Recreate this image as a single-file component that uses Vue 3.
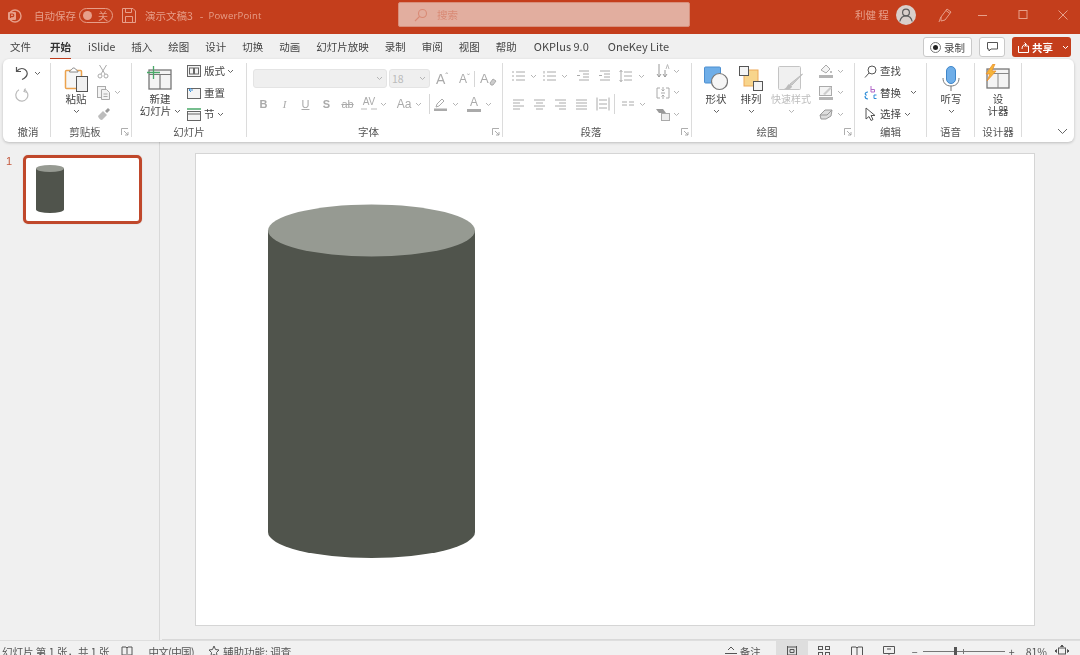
<script setup>
const tabs = ['文件', '开始', 'iSlide', '插入', '绘图', '设计', '切换', '动画', '幻灯片放映', '录制', '审阅', '视图', '帮助']
</script>

<template>
  <div class="app">
    <header class="title">
      <svg class="logo" width="16" height="16" viewBox="0 0 16 16"><circle cx="9" cy="8" r="6" fill="none" stroke="#e79f8a" stroke-width="1.4"/><rect x="2" y="4" width="8" height="8" rx="1" fill="#e79f8a"/><path d="M4.5 10V6h2a1.2 1.2 0 0 1 0 2.6h-2" fill="none" stroke="#c43e1c" stroke-width="1.1"/></svg>
      <span class="autosave">自动保存</span>
      <span class="toggle"><i></i><b>关</b></span>
      <svg class="save" width="14" height="15" viewBox="0 0 14 15" fill="none" stroke="#e79f8a"><path d="M.5.5h10.5l2.5 2.5v11.5H.5z"/><path d="M3.5.5v4h6v-4M3.5 14.5v-6h7v6"/></svg>
      <span class="docname">演示文稿3</span>
      <span class="dash">-</span>
      <span class="appname">PowerPoint</span>
      <div class="search">
        <svg width="14" height="14" viewBox="0 0 14 14" fill="none" stroke="#d98a75" stroke-width="1.1"><circle cx="8.5" cy="5.5" r="4"/><path d="M5.5 8.5L1 13"/></svg>
        <span>搜索</span>
      </div>
      <span class="user">利健 程</span>
      <svg class="avatar" width="20" height="20" viewBox="0 0 20 20"><circle cx="10" cy="10" r="10" fill="#d9cfcb"/><circle cx="10" cy="7.5" r="3.4" fill="none" stroke="#5b5b5b" stroke-width="1.2"/><path d="M3.8 16.5c.8-3.8 3.2-5.6 6.2-5.6s5.400 1.800 6.200 5.600" fill="none" stroke="#5b5b5b" stroke-width="1.2"/></svg>
      <svg class="pen" width="14" height="16" viewBox="0 0 14 16" fill="none" stroke="#e79f8a"><path d="M3 10l6-8 4 3-6 8-4 1z"/><path d="M1 15c1-3 1-3 2-5M8 3.500l4 3"/></svg>
      <div class="winbtns">
        <svg width="12" height="12" viewBox="0 0 12 12"><path d="M1 6.500h9" stroke="#e79f8a" fill="none"/></svg>
        <svg width="12" height="12" viewBox="0 0 12 12"><rect x="2" y="1.500" width="8" height="8" stroke="#e79f8a" fill="none"/></svg>
        <svg width="12" height="12" viewBox="0 0 12 12"><path d="M1.500 1.500l9 9M10.500 1.500l-9 9" stroke="#e79f8a" fill="none"/></svg>
      </div>
    </header>

    <nav class="tabbar">
      <div class="tabs">
        <span v-for="t in tabs" :key="t" class="tab" :class="{ active: t === '开始', lead: t === '文件' }">{{ t }}</span>
        <span class="tab okplus">OKPlus 9.0</span>
        <span class="tab onekey">OneKey Lite</span>
      </div>
      <div class="tabright">
        <span class="pill rec"><svg width="11" height="11" viewBox="0 0 11 11"><circle cx="5.500" cy="5.500" r="5" fill="none" stroke="#777"/><circle cx="5.500" cy="5.500" r="2.500" fill="#222"/></svg>录制</span>
        <span class="pill cmt"><svg width="11" height="10" viewBox="0 0 11 10"><path d="M.5.500h10v6.500H4l-2 2V7H.5z" fill="none" stroke="#555"/></svg></span>
        <span class="share">
          <svg width="13" height="12" viewBox="0 0 13 12" fill="none" stroke="#fff"><path d="M1.500 5v6.500h10V5h-3M5 8c0-3 1.500-4.500 4-4.500M7.500 1.500l2 2-2 2"/></svg>
          <b>共享</b>
          <svg class="sharechev" width="7" height="5" viewBox="0 0 7 5" fill="none" stroke="#fff"><path d="M1 1l2.500 2.500L6 1"/></svg>
        </span>
      </div>
    </nav>

    <section class="ribbon">
      <!-- 撤消 -->
      <div class="group g1">
        <div class="body col3 undo">
          <div class="row">
            <svg width="14" height="15" viewBox="0 0 14 15" fill="none" stroke="#555" stroke-width="1.200"><path d="M1.500 1v4.500H6"/><path d="M1.500 5.500C4 2.500 7.500 2 10 3.500c3.500 2.500 3 7.500-3 10"/></svg>
            <svg class="chev" viewBox="0 0 7 5"><path d="M1 1l2.500 2.500L6 1"/></svg>
          </div>
          <div class="row">
            <svg width="14" height="15" viewBox="0 0 14 15" fill="none" stroke="#bbb" stroke-width="1.200"><path d="M10.500 1.500L9 4.500l3 1"/><path d="M9 2.500a6 6 0 1 1-5 .3"/></svg>
          </div>
        </div>
        <div class="label">撤消</div>
      </div>

      <!-- 剪贴板 -->
      <div class="group g2 haslaunch">
        <div class="body">
          <div class="big paste">
            <svg width="24" height="26" viewBox="0 0 24 26"><rect x="1.500" y="4.500" width="16" height="18" rx="1" fill="#f6f6f6" stroke="#eca24d" stroke-width="1.500"/><path d="M5.500 6c0-2 2-1.500 2.500-3a2 2 0 0 1 3.500 0c.5 1.500 2.500 1 2.500 3z" fill="#fff" stroke="#888"/><rect x="12.500" y="10.500" width="11" height="15" fill="#f0f0f0" stroke="#555"/></svg>
            <span class="dark">粘贴</span>
            <svg class="chev" viewBox="0 0 7 5"><path d="M1 1l2.500 2.500L6 1"/></svg>
          </div>
          <div class="col3 clip">
            <div class="row">
              <svg width="12" height="15" viewBox="0 0 12 15" fill="none" stroke="#aaa"><path d="M2.500 1l5.500 9M9.500 1L4 10"/><circle cx="3" cy="12" r="2"/><circle cx="9" cy="12" r="2"/></svg>
            </div>
            <div class="row">
              <svg width="13" height="14" viewBox="0 0 13 14" fill="#f4f4f4" stroke="#aaa"><rect x=".5" y=".5" width="8" height="11"/><path d="M4.500 3.500h5l3 3v7h-8z"/><path d="M6.500 8h4M6.500 10.500h4"/></svg>
              <svg class="chev faint" viewBox="0 0 7 5"><path d="M1 1l2.500 2.500L6 1"/></svg>
            </div>
            <div class="row">
              <svg width="14" height="14" viewBox="0 0 14 14"><path d="M1 9l5-5 4 4-5 5c-2 0-3.500-2-4-4z" fill="#bdbdbd"/><path d="M8 4l3-3 2 2-3 3z" fill="#999"/></svg>
            </div>
          </div>
        </div>
        <div class="label">剪贴板</div>
        <svg class="launcher" viewBox="0 0 8 8"><path d="M.5 7V.5H7M3 3l4 4M7 4v3H4"/></svg>
      </div>

      <!-- 幻灯片 -->
      <div class="group g3">
        <div class="body">
          <div class="big newslide">
            <svg width="26" height="26" viewBox="0 0 26 26"><rect x="3" y="4" width="22" height="19" fill="#f4f4f4" stroke="#777" stroke-width="1.300"/><path d="M3 8.500h22M14 8.500V23" stroke="#777" fill="none" stroke-width="1.200"/><path d="M7.500 0v13M1 6.500h13" stroke="#48a868" stroke-width="1.300" fill="none"/></svg>
            <span class="dark">新建</span>
            <span class="dark withchev">幻灯片<svg class="chev" viewBox="0 0 7 5"><path d="M1 1l2.500 2.500L6 1"/></svg></span>
          </div>
          <div class="col3 slidecol">
            <div class="row"><svg width="14" height="12" viewBox="0 0 14 12" fill="#f4f4f4" stroke="#666"><rect x=".5" y=".5" width="13" height="11"/><rect x="2.500" y="3" width="4" height="6"/><rect x="7.500" y="3" width="4" height="6"/></svg><span class="dark">版式</span><svg class="chev" viewBox="0 0 7 5"><path d="M1 1l2.500 2.500L6 1"/></svg></div>
            <div class="row"><svg width="14" height="12" viewBox="0 0 14 12" fill="none"><rect x=".5" y="1.500" width="13" height="10" stroke="#666" fill="#f4f4f4"/><path d="M2 3l2-2M2 3l2 2M2 3h4" stroke="#3a8fd8"/></svg><span class="dark">重置</span></div>
            <div class="row"><svg width="14" height="13" viewBox="0 0 14 13" fill="none"><path d="M0 1h14" stroke="#48a868" stroke-width="1.500"/><rect x=".5" y="3.500" width="13" height="9" stroke="#666" fill="#f4f4f4"/><path d="M0 6h14" stroke="#666"/></svg><span class="dark">节</span><svg class="chev" viewBox="0 0 7 5"><path d="M1 1l2.500 2.500L6 1"/></svg></div>
          </div>
        </div>
        <div class="label">幻灯片</div>
      </div>

      <!-- 字体 -->
      <div class="group g4 haslaunch">
        <div class="body fontbody">
          <div class="fontrow1">
            <span class="select s1"><svg class="chev faint" viewBox="0 0 7 5"><path d="M1 1l2.500 2.500L6 1"/></svg></span>
            <span class="select s2"><em>18</em><svg class="chev faint" viewBox="0 0 7 5"><path d="M1 1l2.500 2.500L6 1"/></svg></span>
            <span class="glyph growa">A<sup>ˆ</sup></span>
            <span class="glyph shrinka">A<sup>ˇ</sup></span>
            <i class="vsep"></i>
            <span class="glyph cleara">A<svg width="8" height="8" viewBox="0 0 8 8"><path d="M1 5l3-4 3 2-3 4H2z" fill="#ccc" stroke="#aaa"/></svg></span>
          </div>
          <div class="fontrow2">
            <span class="f w21 b">B</span>
            <span class="f w21 it">I</span>
            <span class="f w21 un">U</span>
            <span class="f w21 sh">S</span>
            <span class="f w21 st">ab</span>
            <span class="f w22 av">AV<svg width="16" height="4" viewBox="0 0 16 4" fill="none" stroke="#bbb"><path d="M0 2h6M10 2h6"/></svg></span>
            <svg class="chev faint" viewBox="0 0 7 5"><path d="M1 1l2.500 2.500L6 1"/></svg>
            <span class="f aa">Aa</span>
            <svg class="chev faint" viewBox="0 0 7 5"><path d="M1 1l2.500 2.500L6 1"/></svg>
            <i class="vsep tall"></i>
            <span class="colorbtn first"><svg width="13" height="13" viewBox="0 0 13 13"><path d="M2 9l1-3 5-5 2 2-5 5z" fill="none" stroke="#aaa"/><rect y="10.500" width="13" height="2.500" fill="#aaa"/></svg></span>
            <svg class="chev faint" viewBox="0 0 7 5"><path d="M1 1l2.500 2.500L6 1"/></svg>
            <span class="colorbtn second">A</span>
            <svg class="chev faint" viewBox="0 0 7 5"><path d="M1 1l2.500 2.500L6 1"/></svg>
          </div>
        </div>
        <div class="label">字体</div>
        <svg class="launcher" viewBox="0 0 8 8"><path d="M.5 7V.5H7M3 3l4 4M7 4v3H4"/></svg>
      </div>

      <!-- 段落 -->
      <div class="group g5 haslaunch">
        <div class="body parabody">
          <div class="paraleft">
            <div class="pararow r1">
              <svg class="pi" viewBox="0 0 13 12"><path d="M4 2h9M4 6h9M4 10h9M0 2h2M0 6h2M0 10h2"/></svg>
              <svg class="chev faint c1" viewBox="0 0 7 5"><path d="M1 1l2.500 2.500L6 1"/></svg>
              <svg class="pi n" viewBox="0 0 13 12"><path d="M4 2h9M4 6h9M4 10h9M1 1v2.500M0 6h2M0 10h2"/></svg>
              <svg class="chev faint c2" viewBox="0 0 7 5"><path d="M1 1l2.500 2.500L6 1"/></svg>
              <svg class="pi o" viewBox="0 0 13 12"><path d="M2 1h10M6 4h6M6 7h6M2 10h10M0 5.500h3"/></svg>
              <svg class="pi i" viewBox="0 0 13 12"><path d="M2 1h10M6 4h6M6 7h6M2 10h10M1 5.500h3"/></svg>
              <svg class="pi l" viewBox="0 0 13 12"><path d="M5 2h8M5 6h8M5 10h8M2 0v12M.5 2L2 .5 3.500 2M.5 10L2 11.500 3.500 10"/></svg>
              <svg class="chev faint c3" viewBox="0 0 7 5"><path d="M1 1l2.500 2.500L6 1"/></svg>
            </div>
            <div class="pararow r2">
              <svg class="pi" viewBox="0 0 13 12"><path d="M1 2h11M1 5h7M1 8h11M1 11h7"/></svg>
              <svg class="pi a" viewBox="0 0 13 12"><path d="M1 2h11M3 5h7M1 8h11M3 11h7"/></svg>
              <svg class="pi a" viewBox="0 0 13 12"><path d="M1 2h11M5 5h7M1 8h11M5 11h7"/></svg>
              <svg class="pi a" viewBox="0 0 13 12"><path d="M1 2h11M1 5h11M1 8h11M1 11h11"/></svg>
              <svg class="pi d" viewBox="0 0 14 14"><path d="M1 .5v13M13 .5v13M3 3h8M3 7h8M3 11h8"/></svg>
              <i class="vsep para"></i>
              <svg class="pi cols" viewBox="0 0 13 12"><path d="M1 4h5M1 7h5M8 4h5M8 7h5"/></svg>
              <svg class="chev faint c4" viewBox="0 0 7 5"><path d="M1 1l2.500 2.500L6 1"/></svg>
            </div>
          </div>
          <div class="col3 pararight">
            <div class="row"><svg width="14" height="14" viewBox="0 0 14 14" fill="none" stroke="#999"><path d="M3 0v13M1 10l2 3 2-3M9 6v7M7 10l2 3 2-3"/><path d="M10 5l1.500-4.500L13 5" stroke="#bbb"/></svg><svg class="chev faint" viewBox="0 0 7 5"><path d="M1 1l2.500 2.500L6 1"/></svg></div>
            <div class="row"><svg width="14" height="14" viewBox="0 0 14 14" fill="none" stroke="#aaa"><path d="M4 2H1v10h3M10 2h3v10h-3M7 1v4M5.500 3.500L7 5l1.500-1.500M7 13V9M5.500 10.500L7 9l1.500 1.500M5 7h4"/></svg><svg class="chev faint" viewBox="0 0 7 5"><path d="M1 1l2.500 2.500L6 1"/></svg></div>
            <div class="row"><svg width="14" height="13" viewBox="0 0 14 13"><path d="M0 1h7l3 4H3z" fill="#999"/><rect x="5.500" y="5.500" width="8" height="7" fill="#eee" stroke="#aaa"/></svg><svg class="chev faint" viewBox="0 0 7 5"><path d="M1 1l2.500 2.500L6 1"/></svg></div>
          </div>
        </div>
        <div class="label">段落</div>
        <svg class="launcher" viewBox="0 0 8 8"><path d="M.5 7V.5H7M3 3l4 4M7 4v3H4"/></svg>
      </div>

      <!-- 绘图 -->
      <div class="group g6 haslaunch">
        <div class="body">
          <div class="big shape">
            <svg width="24" height="26" viewBox="0 0 24 26"><rect x=".5" y="1" width="16" height="16" rx="1" fill="#6faee8" stroke="#4d8fd0"/><circle cx="15.500" cy="15.500" r="8" fill="#f6f6f6" stroke="#777" stroke-width="1.200"/></svg>
            <span class="dark">形状</span>
            <svg class="chev" viewBox="0 0 7 5"><path d="M1 1l2.500 2.500L6 1"/></svg>
          </div>
          <div class="big arrange">
            <svg width="24" height="26" viewBox="0 0 24 26"><rect x="5" y="4" width="14" height="16" fill="#f8d58c" stroke="#eda958"/><rect x=".5" y=".5" width="9" height="9" fill="#f4f4f4" stroke="#555"/><rect x="14.500" y="15.500" width="9" height="9" fill="#f4f4f4" stroke="#555"/></svg>
            <span class="dark">排列</span>
            <svg class="chev" viewBox="0 0 7 5"><path d="M1 1l2.500 2.500L6 1"/></svg>
          </div>
          <div class="big quick">
            <svg width="26" height="26" viewBox="0 0 26 26"><rect x=".5" y=".5" width="22" height="23" rx="1" fill="#f0f0f0" stroke="#c4c4c4"/><path d="M24.500 8L14 19l-2-1z" fill="#ccc" stroke="#bbb"/><path d="M11 18c-2 1-2 4-5 5 4 1 8 0 8-3z" fill="#bbb"/></svg>
            <span class="mute">快速样式</span>
            <svg class="chev faint" viewBox="0 0 7 5"><path d="M1 1l2.500 2.500L6 1"/></svg>
          </div>
          <div class="col3 drawcol">
            <div class="row"><svg width="14" height="14" viewBox="0 0 14 14"><path d="M2 6l5-5 4 4-4 4z" fill="#f4f4f4" stroke="#aaa"/><circle cx="12" cy="8" r="1" fill="#aaa"/><rect y="11" width="14" height="3" fill="#b5b5b5"/></svg><svg class="chev faint" viewBox="0 0 7 5"><path d="M1 1l2.500 2.500L6 1"/></svg></div>
            <div class="row"><svg width="14" height="14" viewBox="0 0 14 14"><rect x=".5" y=".5" width="12" height="9" fill="#f4f4f4" stroke="#aaa"/><path d="M4 8l7-7 2 1-7 7z" fill="#ccc"/><rect y="11" width="14" height="3" fill="#b5b5b5"/></svg><svg class="chev faint" viewBox="0 0 7 5"><path d="M1 1l2.500 2.500L6 1"/></svg></div>
            <div class="row"><svg width="14" height="12" viewBox="0 0 14 12"><path d="M1 7l5-5h7l-1 6-5 3H2z" fill="#ddd" stroke="#999"/><path d="M1 7h7l5-5" fill="none" stroke="#999"/></svg><svg class="chev faint" viewBox="0 0 7 5"><path d="M1 1l2.500 2.500L6 1"/></svg></div>
          </div>
        </div>
        <div class="label">绘图</div>
        <svg class="launcher" viewBox="0 0 8 8"><path d="M.5 7V.5H7M3 3l4 4M7 4v3H4"/></svg>
      </div>

      <!-- 编辑 -->
      <div class="group g7">
        <div class="body col3 editcol">
          <div class="row"><svg width="13" height="13" viewBox="0 0 13 13" fill="none" stroke="#555"><circle cx="8" cy="5" r="4"/><path d="M5 8l-4 4.500"/></svg><span class="dark">查找</span></div>
          <div class="row"><svg width="13" height="14" viewBox="0 0 13 14" fill="none"><path d="M7 0v6M7 3.500h3.500v2.500H7" stroke="#b36ac9"/><path d="M1 8a3 3 0 0 1 3-2M4 13a3 3 0 0 1-3-3M2.500 9.500L1 8" stroke="#2d8cd8" stroke-width="1.100"/><path d="M12.500 9h-2.500v3.500h2.500" stroke="#2d8cd8"/></svg><span class="dark">替换</span><svg class="chev ml6" viewBox="0 0 7 5"><path d="M1 1l2.500 2.500L6 1"/></svg></div>
          <div class="row"><svg width="13" height="15" viewBox="0 0 13 15" fill="#fff" stroke="#555"><path d="M2 1v11l3-2.500 2 4 2-1-2-4h4z"/></svg><span class="dark">选择</span><svg class="chev" viewBox="0 0 7 5"><path d="M1 1l2.500 2.500L6 1"/></svg></div>
        </div>
        <div class="label">编辑</div>
      </div>

      <!-- 语音 -->
      <div class="group g8">
        <div class="body">
          <div class="big voice">
            <svg width="20" height="26" viewBox="0 0 20 26"><rect x="5.500" y=".5" width="9" height="17" rx="4.500" fill="#6faee8" stroke="#3f86c9"/><path d="M2 12c0 5 3 8 8 8s8-3 8-8" fill="none" stroke="#777"/><path d="M10 20v5" stroke="#777"/></svg>
            <span class="dark">听写</span>
            <svg class="chev" viewBox="0 0 7 5"><path d="M1 1l2.500 2.500L6 1"/></svg>
          </div>
        </div>
        <div class="label">语音</div>
      </div>

      <!-- 设计器 -->
      <div class="group g9">
        <div class="body">
          <div class="big designer">
            <svg width="26" height="26" viewBox="0 0 26 26"><rect x="3" y="5" width="22" height="19" fill="#f4f4f4" stroke="#777" stroke-width="1.300"/><path d="M3 9.500h22M14 9.500V24" stroke="#888" fill="none"/><path d="M9 0L2 10h4l-3 7 9-10H8l3-7z" fill="#f5b53a" stroke="#e98a2a" stroke-width=".7"/></svg>
            <span class="dark">设</span>
            <span class="dark">计器</span>
          </div>
        </div>
        <div class="label">设计器</div>
      </div>

      <svg class="collapse" width="11" height="7" viewBox="0 0 11 7" fill="none" stroke="#666"><path d="M1 1l4.500 4.500L10 1"/></svg>
    </section>

    <main class="main">
      <aside class="panel">
        <span class="num">1</span>
        <div class="thumb">
          <svg width="28" height="48" viewBox="0 0 28 48">
            <path d="M0 3.500V44.500A14 3.500 0 0 0 28 44.500V3.500z" fill="#50544c"/>
            <ellipse cx="14" cy="3.500" rx="14" ry="3.500" fill="#969a92"/>
          </svg>
        </div>
      </aside>
      <div class="stage">
        <div class="slide">
          <svg width="838" height="471" viewBox="0 0 838 471">
            <path d="M72 76.500V378A103.500 26 0 0 0 279 378V76.500z" fill="#50544c"/>
            <ellipse cx="175.500" cy="76.500" rx="103.500" ry="26" fill="#969a92"/>
          </svg>
        </div>
      </div>
    </main>

    <footer class="status">
      <div class="sleft">
        <span>幻灯片 第 1 张，共 1 张</span>
        <svg class="sbook" width="12" height="11" viewBox="0 0 12 11" fill="none" stroke="#555"><path d="M1 1h4l1 1 1-1h4v8H7l-1 1-1-1H1zM6 2v8"/></svg>
        <span class="slang">中文(中国)</span>
        <svg class="sacc" width="12" height="12" viewBox="0 0 12 12" fill="none" stroke="#555"><path d="M6 1l1.500 3.500L11 5 8.500 7.500 9 11 6 9.500 3 11l.5-3.500L1 5l3.500-.5z"/></svg>
        <span>辅助功能: 调查</span>
      </div>
      <div class="sright">
        <svg width="12" height="10" viewBox="0 0 12 10" fill="none" stroke="#555"><path d="M3 4l3-3 3 3M0 7.500h12"/></svg>
        <span class="snotes">备注</span>
        <span class="view on"><svg width="12" height="11" viewBox="0 0 12 11" fill="none" stroke="#555"><path d="M1.500 0v11M10.500 0v11M1.500 1h9M1.500 9h9M4 3.500h4v3H4z"/></svg></span>
        <span class="view"><svg width="12" height="11" viewBox="0 0 12 11" fill="none" stroke="#555"><rect x=".5" y=".5" width="4" height="3"/><rect x="7.500" y=".5" width="4" height="3"/><rect x=".5" y="6.500" width="4" height="3"/><rect x="7.500" y="6.500" width="4" height="3"/></svg></span>
        <span class="view"><svg width="12" height="11" viewBox="0 0 12 11" fill="none" stroke="#555"><path d="M.5 1h4.500l1 1 1-1h4.500v9H7l-1 1-1-1H.5zM6 2v9"/></svg></span>
        <span class="view"><svg width="12" height="11" viewBox="0 0 12 11" fill="none" stroke="#555"><path d="M.5.500h11v7h-11zM6 7.500V11M4 3h4"/></svg></span>
        <span class="zm">−</span>
        <div class="slider"><i class="thumbbar"></i><i class="tick"></i></div>
        <span class="zm plus">+</span>
        <span class="pct">81%</span>
        <svg class="fit" width="14" height="13" viewBox="0 0 14 13" fill="none" stroke="#555"><rect x="3.500" y="3" width="7" height="6"/><path d="M7 0L5.500 1.500h3zM7 13l-1.500-1.500h3zM0 6l1.500-1.500v3zM14 6l-1.500-1.500v3z"/></svg>
      </div>
    </footer>
  </div>
</template>

<style>
html, body { margin: 0; background: #f0f0f0; }
</style>

<style scoped>
.app {
  width: 1080px; height: 655px; overflow: hidden; display: flex; flex-direction: column;
  background: #f0f0f0; color: #444;
  font-family: "Noto Sans CJK SC", "Noto Sans", sans-serif; font-size: 10.5px;
  font-synthesis: none;
}
svg { display: block; flex: none; }

/* title bar */
.title {
  height: 34px; background: #c43e1c; color: #e79f8a; display: flex; align-items: center;
  padding-bottom: 3px; box-sizing: border-box; font-size: 10.5px; flex: none;
}
.logo { margin-left: 6px; }
.autosave { margin-left: 12px; width: 41px; white-space: nowrap; }
.toggle {
  margin-left: 4px; width: 34px; height: 15px; box-sizing: border-box; border: 1px solid #e79f8a; border-radius: 8px;
  display: flex; align-items: center; justify-content: space-between; padding: 0 4px 0 3px;
}
.toggle i { width: 9px; height: 9px; border-radius: 50%; background: #e79f8a; }
.toggle b { font-weight: 400; font-size: 10px; }
.save { margin-left: 9px; }
.docname { margin-left: 9px; }
.dash { margin-left: 7px; }
.appname { margin-left: 5px; font-family: "Open Sans", sans-serif; font-size: 9.5px; letter-spacing: .2px; }
.search {
  position: absolute; left: 398px; top: 2px; width: 292px; height: 25px; box-sizing: border-box;
  background: #e2ae9f; border: 1px solid #d88f7b; border-radius: 2px;
  display: flex; align-items: center; gap: 9px; padding-left: 15px; color: #d98a75;
}
.user { position: absolute; left: 855px; top: 8px; line-height: 14px; }
.avatar { position: absolute; left: 896px; top: 5px; }
.pen { position: absolute; left: 938px; top: 7px; }
.winbtns { position: absolute; left: 977px; top: 9px; display: flex; gap: 28px; }

/* tabs */
.tabbar { height: 25px; flex: none; display: flex; position: relative; background: #f0f0f0; }
.tabs { display: flex; padding-left: 10px; gap: 16px; align-items: flex-start; padding-top: 3px; }
.tab { line-height: 19px; height: 23px; box-sizing: border-box; white-space: nowrap; color: #444; }
.tab.lead { margin-right: 3px; }
.tab.active { font-weight: 700; border-bottom: 2px solid #c43e1c; color: #333; margin-right: 1px; }
.okplus { margin-left: 1px; font-size: 11px; }
.onekey { margin-left: 3px; font-size: 11px; }
.tabright { position: absolute; left: 923px; top: 3px; display: flex; gap: 7px; }
.pill {
  height: 20px; box-sizing: border-box; background: #fff; border: 1px solid #c9c9c9; border-radius: 3px;
  display: flex; align-items: center; justify-content: center; gap: 3px; color: #444;
}
.rec { width: 49px; }
.cmt { width: 26px; }
.share {
  margin-left: 0; width: 59px; height: 20px; background: #c43e1c; border-radius: 3px; color: #fff;
  display: flex; align-items: center; padding-left: 5px; box-sizing: border-box; gap: 2px;
}
.share b { font-size: 10.5px; }
.sharechev { margin-left: 7px; }

/* ribbon */
.ribbon {
  height: 83px; flex: none; margin: 0 6px 0 3px; box-sizing: border-box; padding-top: 4px;
  background: #fff; border-radius: 6px; box-shadow: 0 1px 3px rgba(0,0,0,.22);
  display: flex; position: relative; z-index: 1;
}
.group { position: relative; height: 74px; box-sizing: border-box; border-right: 1px solid #dcdcdc; display: flex; flex-direction: column; flex: none; }
.g1 { width: 48px; padding-left: 3px; }
.g2 { width: 81px; }
.g3 { width: 115px; }
.g4 { width: 256px; }
.g5 { width: 189px; }
.g6 { width: 163px; }
.g7 { width: 72px; }
.g8 { width: 48px; }
.g9 { width: 47px; }
.body { height: 62px; display: flex; flex: none; }
.label { line-height: 12px; text-align: center; color: #555; padding-top: 1px; }
.haslaunch .label { padding-right: 12px; }
.launcher { position: absolute; right: 2px; bottom: 1px; width: 8px; height: 8px; fill: none; stroke: #999; stroke-width: .8; }
.chev { width: 7px; height: 5px; fill: none; stroke: #666; stroke-width: 1; }
.chev.faint { stroke: #b5b5b5; }
.dark { color: #444; line-height: 12px; white-space: nowrap; }
.mute { color: #bcbcbc; line-height: 12px; white-space: nowrap; font-size: 10px; }
.row { height: 16px; display: flex; align-items: center; }
.col3 { display: flex; flex-direction: column; gap: 5.500px; }
.big { display: flex; flex-direction: column; align-items: center; padding-top: 3px; flex: none; }
.big > svg:first-child { margin-bottom: 1px; }
.big > .chev { margin-top: 4px; }

.undo { padding: 0 0 0 9px; box-sizing: border-box; gap: 5.500px; flex-direction: column; }
.undo .chev { margin-left: 5px; }
.undo.body > .row:first-child { margin-top: 2px; }
.paste { width: 26px; margin-left: 12px; }
.clip { margin-left: 8px; }
.clip .chev { margin-left: 4px; }
.newslide { width: 48px; margin-left: 4px; }
.newslide > svg:first-child { margin-right: 3px; }
.withchev { display: flex; align-items: center; gap: 3px; margin-left: 1px; }
.slidecol { margin-left: 2px; }
.slidecol .row { gap: 2px; }
.slidecol .row svg:first-child { margin-left: 1px; margin-right: 1px; }
.slidecol .chev { margin-left: 0; }

/* font group */
.fontbody { flex-direction: column; padding: 6px 0 0 6px; box-sizing: border-box; }
.fontrow1 { display: flex; align-items: center; height: 19px; }
.select {
  height: 19px; box-sizing: border-box; background: #efefef; border: 1px solid #e4e4e4; border-radius: 3px;
  display: flex; align-items: center; justify-content: flex-end; padding-right: 3px;
}
.s1 { width: 134px; }
.s2 { width: 41px; margin-left: 2px; justify-content: space-between; padding-left: 2px; }
.s2 em { font-style: normal; color: #bbb; font-size: 10.5px; }
.glyph { color: #aaa; font-family: "Liberation Sans", sans-serif; display: flex; align-items: flex-start; }
.glyph sup { font-size: 9px; line-height: 10px; vertical-align: baseline; }
.growa { margin-left: 6px; width: 21px; font-size: 14px; }
.shrinka { margin-left: 2px; width: 15px; font-size: 12px; padding-top: 1px; }
.vsep { width: 1px; height: 16px; background: #d6d6d6; flex: none; }
.cleara { margin-left: 5px; font-size: 13px; align-items: flex-end; }
.fontrow2 { display: flex; align-items: center; height: 16px; margin-top: 8px; font-family: "Liberation Sans", sans-serif; color: #aaa; }
.f { text-align: center; font-size: 11px; flex: none; }
.w21 { width: 21px; }
.w22 { width: 22px; }
.b { font-weight: 700; }
.it { font-style: italic; font-family: "Liberation Serif", serif; }
.un { text-decoration: underline; }
.sh { font-weight: 700; }
.st { text-decoration: line-through; }
.av { display: flex; flex-direction: column; align-items: center; line-height: 10px; font-size: 10px; }
.aa { margin-left: 6px; width: 22px; font-size: 12px; }
.fontrow2 > .chev { margin: 0; }
.tall { margin-left: 7px; height: 20px; }
.colorbtn { flex: none; }
.first { margin-left: 4px; margin-right: 4px; width: 14px; }
.second { margin-left: 8px; width: 14px; margin-right: 4px; text-align: center; font-size: 12px; line-height: 12px; border-bottom: 3px solid #aaa; height: 13px; }

/* paragraph */
.parabody { justify-content: flex-start; }
.paraleft { width: 153px; padding: 6px 0 0 9px; box-sizing: border-box; flex: none; }
.pararow { display: flex; align-items: center; height: 14px; }
.r2 { margin-top: 14px; }
.pi { width: 13px; height: 12px; fill: none; stroke: #aaa; stroke-width: 1; flex: none; }
.c1 { margin-left: 5px; }
.n { margin-left: 6px; }
.c2 { margin-left: 5px; }
.o { margin-left: 9px; }
.i { margin-left: 8px; }
.l { margin-left: 8px; }
.c3 { margin-left: 6px; }
.a { margin-left: 8px; }
.d { margin-left: 8px; height: 14px; width: 14px; }
.para { margin-left: 4px; height: 20px; }
.cols { margin-left: 6px; }
.c4 { margin-left: 5px; }
.pararight { margin-left: 0; }
.pararight .chev { margin-left: 3px; }

/* drawing */
.shape { width: 26px; margin-left: 11px; }
.arrange { width: 26px; margin-left: 9px; }
.quick { width: 42px; margin-left: 6px; }
.drawcol { margin-left: 7px; }
.drawcol .chev { margin-left: 4px; }

/* edit */
.editcol { flex-direction: column; padding-left: 9px; box-sizing: border-box; }
.editcol .row { gap: 3px; }
.ml6 { margin-left: 6px; }

.voice { width: 48px; }
.designer { width: 46px; padding-top: 1px; }
.designer > svg:first-child { margin-bottom: 3px; margin-right: 2px; }
.collapse { position: absolute; left: 1054px; top: 69px; }

/* main */
.main { flex: 1; display: flex; min-height: 0; background: #f0f0f0; }
.panel { width: 160px; flex: none; box-sizing: border-box; border-right: 1px solid #d9d9d9; display: flex; padding-top: 13px; padding-left: 6px; align-items: flex-start; }
.num { width: 17px; color: #c4593e; font-size: 11px; line-height: 13px; font-family: "Liberation Sans", sans-serif; }
.thumb { width: 119px; height: 69px; box-sizing: border-box; background: #fff; border: 3px solid #c0482b; border-radius: 5px; padding: 7px 0 0 10px; box-shadow: 0 0 0 1px #e9e9e9; }
.stage { flex: 1; margin-left: 2px; border-bottom: 1px solid #d9d9d9; padding: 11px 0 0 33px; box-sizing: border-box; }
.slide { width: 840px; height: 473px; box-sizing: border-box; background: #fff; border: 1px solid #d5d5d5; }

/* status */
.status {
  height: 15px; flex: none; display: flex; justify-content: space-between; background: #f1f1f1; border-top: 1px solid #dedede;
  box-sizing: border-box; overflow: hidden; font-size: 10.5px; color: #555;
}
.sleft { display: flex; height: 20px; align-items: center; padding-left: 2px; white-space: nowrap; }
.sbook { margin-left: 12px; }
.slang { margin-left: 15px; letter-spacing: -.6px; }
.sacc { margin-left: 14px; margin-right: 3px; }
.sright { display: flex; height: 20px; align-items: center; padding-right: 11px; white-space: nowrap; }
.snotes { margin-left: 3px; margin-right: 15px; }
.view { width: 32.500px; height: 20px; display: flex; align-items: center; justify-content: center; }
.view.on { background: #dedede; }
.zm { margin-left: 5px; width: 8px; text-align: center; }
.zm.plus { margin-left: 3px; }
.slider { width: 82px; height: 1px; background: #777; margin-left: 4px; position: relative; }
.thumbbar { position: absolute; left: 31px; top: -4px; width: 3px; height: 9px; background: #555; }
.tick { position: absolute; left: 40px; top: -2px; width: 1px; height: 5px; background: #777; }
.pct { margin-left: 10px; }
.fit { margin-left: 8px; }

.title, .tabbar, .ribbon, .panel, .status { filter: blur(.3px); }
</style>
